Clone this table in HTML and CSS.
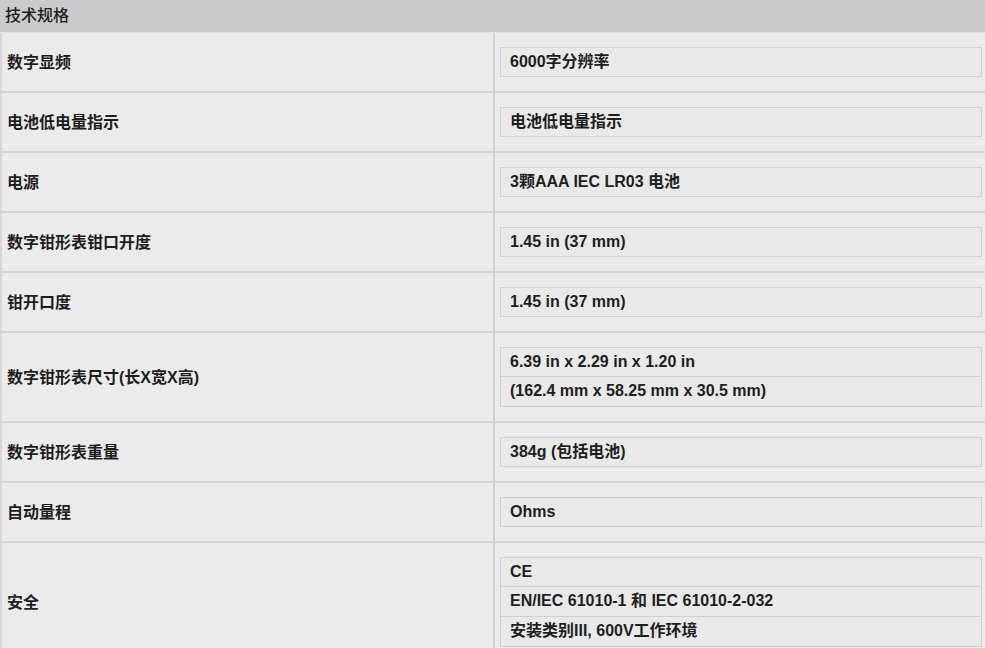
FILE: index.html
```html
<!DOCTYPE html>
<html lang="zh-CN">
<head>
<meta charset="utf-8">
<title>技术规格</title>
<link rel="stylesheet" href="styles.css">
</head>
<body>
<div class="spec">
  <div class="spec-head">技术规格</div>
  <div class="row"><div class="label">数字显频</div><div class="values"><div class="val">6000字分辨率</div></div></div>
  <div class="row"><div class="label">电池低电量指示</div><div class="values"><div class="val">电池低电量指示</div></div></div>
  <div class="row"><div class="label">电源</div><div class="values"><div class="val">3颗AAA IEC LR03 电池</div></div></div>
  <div class="row"><div class="label">数字钳形表钳口开度</div><div class="values"><div class="val">1.45 in (37 mm)</div></div></div>
  <div class="row"><div class="label">钳开口度</div><div class="values"><div class="val">1.45 in (37 mm)</div></div></div>
  <div class="row"><div class="label">数字钳形表尺寸(长X宽X高)</div><div class="values"><div class="val">6.39 in x 2.29 in x 1.20 in</div><div class="val">(162.4 mm x 58.25 mm x 30.5 mm)</div></div></div>
  <div class="row"><div class="label">数字钳形表重量</div><div class="values"><div class="val">384g (包括电池)</div></div></div>
  <div class="row"><div class="label">自动量程</div><div class="values"><div class="val">Ohms</div></div></div>
  <div class="row"><div class="label">安全</div><div class="values"><div class="val">CE</div><div class="val">EN/IEC 61010-1 和 IEC 61010-2-032</div><div class="val">安装类别III, 600V工作环境</div></div></div>
</div>
</body>
</html>
```
FILE: styles.css
```css
html, body {
  margin: 0;
  padding: 0;
  background: #ebebeb;
}
body {
  font-family: "Liberation Sans", Arial, "Noto Sans CJK SC", sans-serif;
  font-size: 16px;
  color: #1e1e1e;
}
.spec {
  width: 985px;
}
.spec-head {
  height: 32px;
  line-height: 32px;
  background: #cbcbcb;
  padding-left: 5px;
  color: #1e1e1e;
  font-weight: 500;
  border-bottom: 1px solid #e2e2e2;
}
.row {
  display: grid;
  grid-template-columns: 495px 1fr;
  border-bottom: 2px solid #d2d2d2;
  background: #ebebeb;
}
.label {
  display: flex;
  align-items: center;
  padding-left: 5px;
  padding-bottom: 2px;
  border-left: 2px solid #d6d6d6;
  border-right: 2px solid #d2d2d2;
  font-weight: bold;
}
.values {
  display: flex;
  flex-direction: column;
  padding: 14px 3px 14px 5px;
}
.val {
  height: 28px;
  line-height: 28px;
  padding-left: 9px;
  border: 1px solid #d0d0d0;
  background: #e9e9e9;
  font-weight: bold;
  white-space: nowrap;
}
.val + .val {
  border-top: 0;
  height: 29px;
}
```
